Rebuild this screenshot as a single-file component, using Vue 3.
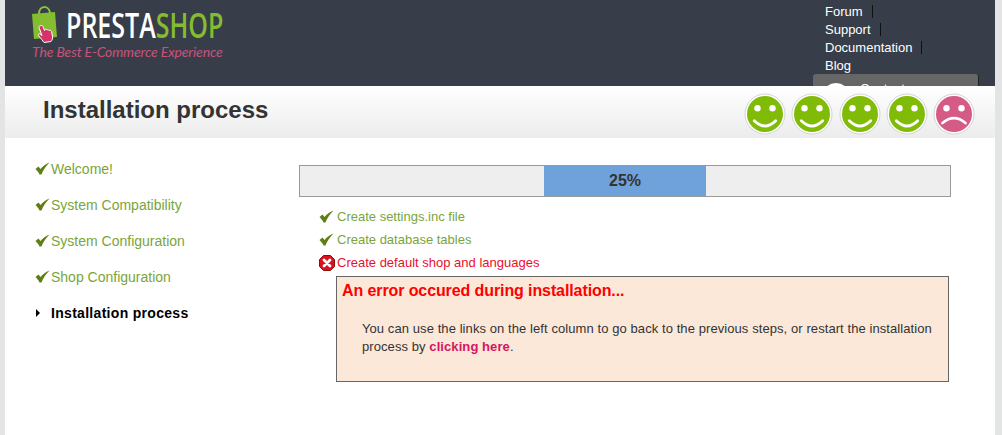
<script setup>
const steps = [
  { label: 'Welcome!' },
  { label: 'System Compatibility' },
  { label: 'System Configuration' },
  { label: 'Shop Configuration' }
];
const tasks = ['Create settings.inc file', 'Create database tables'];
const links = ['Forum', 'Support', 'Documentation', 'Blog'];
const moods = ['ok', 'ok', 'ok', 'ok', 'bad'];
</script>

<template>
  <div class="page">
    <header class="top">
      <div class="logo">
        <svg class="bag" width="30" height="40" viewBox="0 0 30 40">
          <path d="M8 8C8 -1 18 -1 19 7" fill="none" stroke="#8cc63f" stroke-width="2" />
          <path d="M1 8 24 6 26 31 3 33Z" fill="#84bd2f" />
          <path transform="translate(-2 3)" d="M11 17c1-1 2.500-.5 3 .5l1.500 4 .5-1c1-.5 1.800 0 2 .5.800-.5 1.700-.2 2 .5.800-.5 2-.2 2.500 1l1 5c.3 2-.5 4-1.500 5l-7 1c-1.500-2-3-4-5.500-7-.6-1 .4-2 1.500-1.500l2 1.500-3-8c-.2-1 .5-1.500 1-1.500Z" fill="#d6336c" stroke="#fff" stroke-width="1" />
        </svg>
        <div class="brand">
          <div class="wordmark"><span class="presta">PRESTA</span><span class="shop">SHOP</span></div>
          <div class="tagline">The Best E-Commerce Experience</div>
        </div>
      </div>
      <nav class="nav">
        <ul>
          <li v-for="link in links" :key="link"><a>{{ link }}</a></li>
        </ul>
        <div class="contact">
          <span class="contact-icon"></span>
          <span>Contact us</span>
        </div>
      </nav>
    </header>

    <div class="band">
      <h1>Installation process</h1>
      <div class="moods">
        <svg v-for="(mood, i) in moods" :key="i" class="mood" width="42" height="42" viewBox="0 0 42 42">
          <circle cx="21" cy="21" r="20" fill="#fff" stroke="#d4d4d4" stroke-width="1" />
          <circle cx="21" cy="21" r="18" :fill="mood === 'ok' ? '#80bc07' : '#d55a85'" />
          <circle cx="13.500" cy="15.300" r="3.200" fill="#fff" />
          <circle cx="28.500" cy="15.300" r="3.200" fill="#fff" />
          <path v-if="mood === 'ok'" d="M10.300 27.700Q21 38.300 31.700 27.700" fill="none" stroke="#fff" stroke-width="2.800" stroke-linecap="round" />
          <path v-else d="M9.500 30Q21 20.300 32.500 30" fill="none" stroke="#fff" stroke-width="2.800" stroke-linecap="round" />
        </svg>
      </div>
    </div>

    <main class="content">
      <ul class="steps">
        <li v-for="step in steps" :key="step.label" class="step">
          <svg class="check" width="15" height="13" viewBox="0 0 15 13">
            <path d="M0.500 7 3.500 4.500 5.500 7C8 4 10.500 2 14.500 0.500 11 4 8 8 6.500 12.500H4.500C3.500 10 2 8.500 0.500 7Z" fill="#5f7f13" />
          </svg>
          {{ step.label }}
        </li>
        <li class="step current">
          <span class="arrow"></span>
          Installation process
        </li>
      </ul>

      <section class="install">
        <div class="progress">
          <div class="progress-fill"></div>
          <span class="progress-label">25%</span>
        </div>
        <ul class="tasks">
          <li v-for="task in tasks" :key="task" class="task">
            <svg class="check" width="15" height="13" viewBox="0 0 15 13">
              <path d="M0.500 7 3.500 4.500 5.500 7C8 4 10.500 2 14.500 0.500 11 4 8 8 6.500 12.500H4.500C3.500 10 2 8.500 0.500 7Z" fill="#5f7f13" />
            </svg>
            {{ task }}
          </li>
          <li class="task failed">
            <svg class="cross" width="16" height="16" viewBox="0 0 16 16">
              <path d="M4.500 0.500h7l4 4v7l-4 4h-7l-4-4v-7Z" fill="#d8131c" stroke="#8e0d12" />
              <path d="M5 5 11 11M11 5 5 11" stroke="#fff" stroke-width="2.800" stroke-linecap="round" />
            </svg>
            Create default shop and languages
          </li>
        </ul>
        <div class="error">
          <h2>An error occured during installation...</h2>
          <p>You can use the links on the left column to go back to the previous steps, or restart the installation process by <a>clicking here</a>.</p>
        </div>
      </section>
    </main>
  </div>
</template>

<style>
html, body {
  background: #e3e5e4;
}
</style>

<style scoped>
.page {
  width: 990px;
  height: 435px;
  margin-left: 5px;
  background: #fff;
  font-family: "Liberation Sans", Arial, sans-serif;
  overflow: hidden;
}

ul {
  list-style: none;
  margin: 0;
  padding: 0;
}

.top {
  height: 86px;
  background: #383e49;
  display: flex;
  justify-content: space-between;
  overflow: hidden;
}

.logo {
  display: flex;
  padding: 6px 0 0 26px;
}

.bag {
  flex-shrink: 0;
}

.brand {
  margin-left: 5px;
}

.wordmark {
  width: 157px;
  font-family: "Open Sans", sans-serif;
  font-size: 35px;
  font-weight: 600;
  line-height: 38px;
  white-space: nowrap;
  transform: scaleX(0.715);
  transform-origin: left;
}

.presta {
  color: #fff;
}

.shop {
  color: #84bd2f;
}

.tagline {
  margin-left: -34px;
  font-family: Lato, sans-serif;
  font-size: 14px;
  font-style: italic;
  line-height: 16px;
  letter-spacing: -0.13px;
  color: #c9527c;
  white-space: nowrap;
}

.nav {
  width: 166px;
  margin-right: 16px;
  padding-top: 2px;
  color: #fff;
}

.nav ul {
  padding-left: 12px;
}

.nav li {
  height: 18px;
  font-size: 13px;
  display: flex;
  align-items: center;
}

.nav li a {
  line-height: 13px;
}

.nav li:not(:last-child) a {
  padding-right: 9px;
  border-right: 1px solid #111;
}

.contact {
  height: 50px;
  box-sizing: border-box;
  background: #666;
  border-radius: 3px 3px 0 0;
  border-right: 1px solid #222;
  display: flex;
  align-items: flex-start;
  gap: 10px;
  padding: 7px 0 0 9px;
  font-size: 13px;
  line-height: 16px;
}

.contact-icon {
  width: 28px;
  height: 28px;
  border-radius: 50%;
  background: #fff;
  margin-top: 2px;
}

.band {
  height: 52px;
  background: linear-gradient(#fff, #ececec);
  display: flex;
  justify-content: space-between;
  align-items: center;
  padding: 0 20px 0 38px;
}

.band h1 {
  margin: 0 0 5px;
  font-size: 24px;
  font-weight: 700;
  color: #333;
}

.moods {
  display: flex;
  gap: 5.200px;
  margin-top: 4px;
}

.content {
  display: flex;
  padding-top: 22px;
}

.steps {
  width: 264px;
  flex-shrink: 0;
  padding-left: 30px;
}

.step {
  height: 36px;
  display: flex;
  align-items: flex-start;
  font-size: 14px;
  line-height: 18px;
  color: #7aa53a;
  white-space: nowrap;
}

.step .check {
  margin: 2px 1px 0 0;
}

.current {
  font-weight: 700;
  letter-spacing: 0.3px;
  color: #000;
}

.arrow {
  width: 0;
  height: 0;
  margin: 5px 11px 0 1px;
  border-left: 4px solid #000;
  border-top: 4px solid transparent;
  border-bottom: 4px solid transparent;
}

.install {
  width: 652px;
  padding-top: 5px;
}

.progress {
  position: relative;
  height: 32px;
  box-sizing: border-box;
  border: 1px solid #999;
  background: #eee;
  text-align: center;
  font-size: 16px;
  font-weight: 700;
  line-height: 30px;
  color: #333;
}

.progress-fill {
  position: absolute;
  left: 244px;
  top: 0;
  bottom: 0;
  width: 162px;
  background: #6fa1db;
}

.progress-label {
  position: relative;
}

.tasks {
  padding: 8px 0 0 20px;
}

.task {
  height: 23px;
  display: flex;
  align-items: center;
  gap: 3px;
  font-size: 13px;
  color: #7aa53a;
  white-space: nowrap;
}

.failed {
  color: #e8102e;
  gap: 2px;
}

.error {
  width: 613px;
  height: 106px;
  box-sizing: border-box;
  margin: 2px 0 0 37px;
  border: 1px solid #666;
  background: #fbe8d9;
  padding: 5px;
}

.error h2 {
  margin: 0;
  font-size: 16px;
  line-height: 18px;
  letter-spacing: -0.1px;
  font-weight: 700;
  color: #f00;
}

.error p {
  margin: 20px 10px 0 20px;
  font-size: 13px;
  line-height: 18px;
  letter-spacing: 0.08px;
  color: #333;
}

.error a {
  font-weight: 700;
  color: #d5155f;
}
</style>
